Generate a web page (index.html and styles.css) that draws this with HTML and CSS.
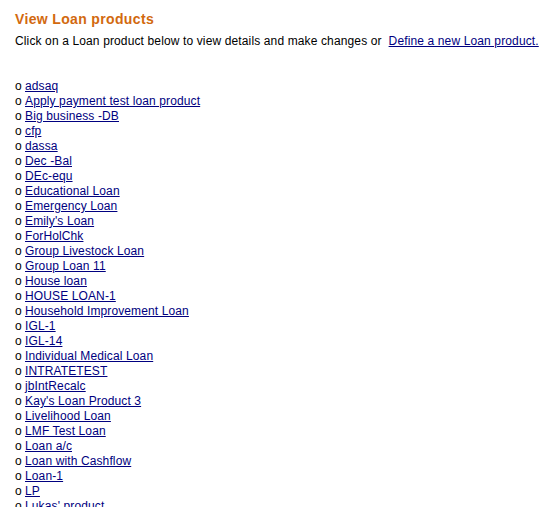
FILE: index.html
```html
<!DOCTYPE html>
<html>
<head>
<meta charset="utf-8">
<link rel="stylesheet" href="styles.css">
</head>
<body>
<div class="page">
  <h1 class="title">View Loan products</h1>
  <p class="intro">Click on a Loan product below to view details and make changes or&nbsp; <a href="#">Define a new Loan product.</a></p>
  <ul class="products">
    <li><a href="#">adsaq</a></li>
    <li><a href="#">Apply payment test loan product</a></li>
    <li><a href="#">Big business -DB</a></li>
    <li><a href="#">cfp</a></li>
    <li><a href="#">dassa</a></li>
    <li><a href="#">Dec -Bal</a></li>
    <li><a href="#">DEc-equ</a></li>
    <li><a href="#">Educational Loan</a></li>
    <li><a href="#">Emergency Loan</a></li>
    <li><a href="#">Emily's Loan</a></li>
    <li><a href="#">ForHolChk</a></li>
    <li><a href="#">Group Livestock Loan</a></li>
    <li><a href="#">Group Loan 11</a></li>
    <li><a href="#">House loan</a></li>
    <li><a href="#">HOUSE LOAN-1</a></li>
    <li><a href="#">Household Improvement Loan</a></li>
    <li><a href="#">IGL-1</a></li>
    <li><a href="#">IGL-14</a></li>
    <li><a href="#">Individual Medical Loan</a></li>
    <li><a href="#">INTRATETEST</a></li>
    <li><a href="#">jbIntRecalc</a></li>
    <li><a href="#">Kay's Loan Product 3</a></li>
    <li><a href="#">Livelihood Loan</a></li>
    <li><a href="#">LMF Test Loan</a></li>
    <li><a href="#">Loan a/c</a></li>
    <li><a href="#">Loan with Cashflow</a></li>
    <li><a href="#">Loan-1</a></li>
    <li><a href="#">LP</a></li>
    <li><a href="#">Lukas' product</a></li>
    <li><a href="#">Microloan</a></li>
  </ul>
</div>
</body>
</html>
```
FILE: styles.css
```css
html, body {
  margin: 0;
  padding: 0;
  background: #ffffff;
}
.page {
  padding: 10px 0 0 15px;
  font-family: "Liberation Sans", Arial, sans-serif;
  font-size: 12px;
  color: #000000;
}
.title {
  margin: 0;
  font-size: 14px;
  font-weight: bold;
  line-height: 18px;
  color: #d2690f;
  letter-spacing: 0.35px;
}
.intro {
  margin: 5px 0 0 0;
  line-height: 16px;
  letter-spacing: 0.13px;
  white-space: nowrap;
}
a {
  color: #000080;
  text-decoration: underline;
}
.products {
  list-style: none;
  margin: 30px 0 0 0;
  padding: 0;
}
.products li {
  line-height: 15px;
  white-space: nowrap;
}
.products li a {
  letter-spacing: 0.12px;
}
.products li::before {
  content: "o ";
}
```
